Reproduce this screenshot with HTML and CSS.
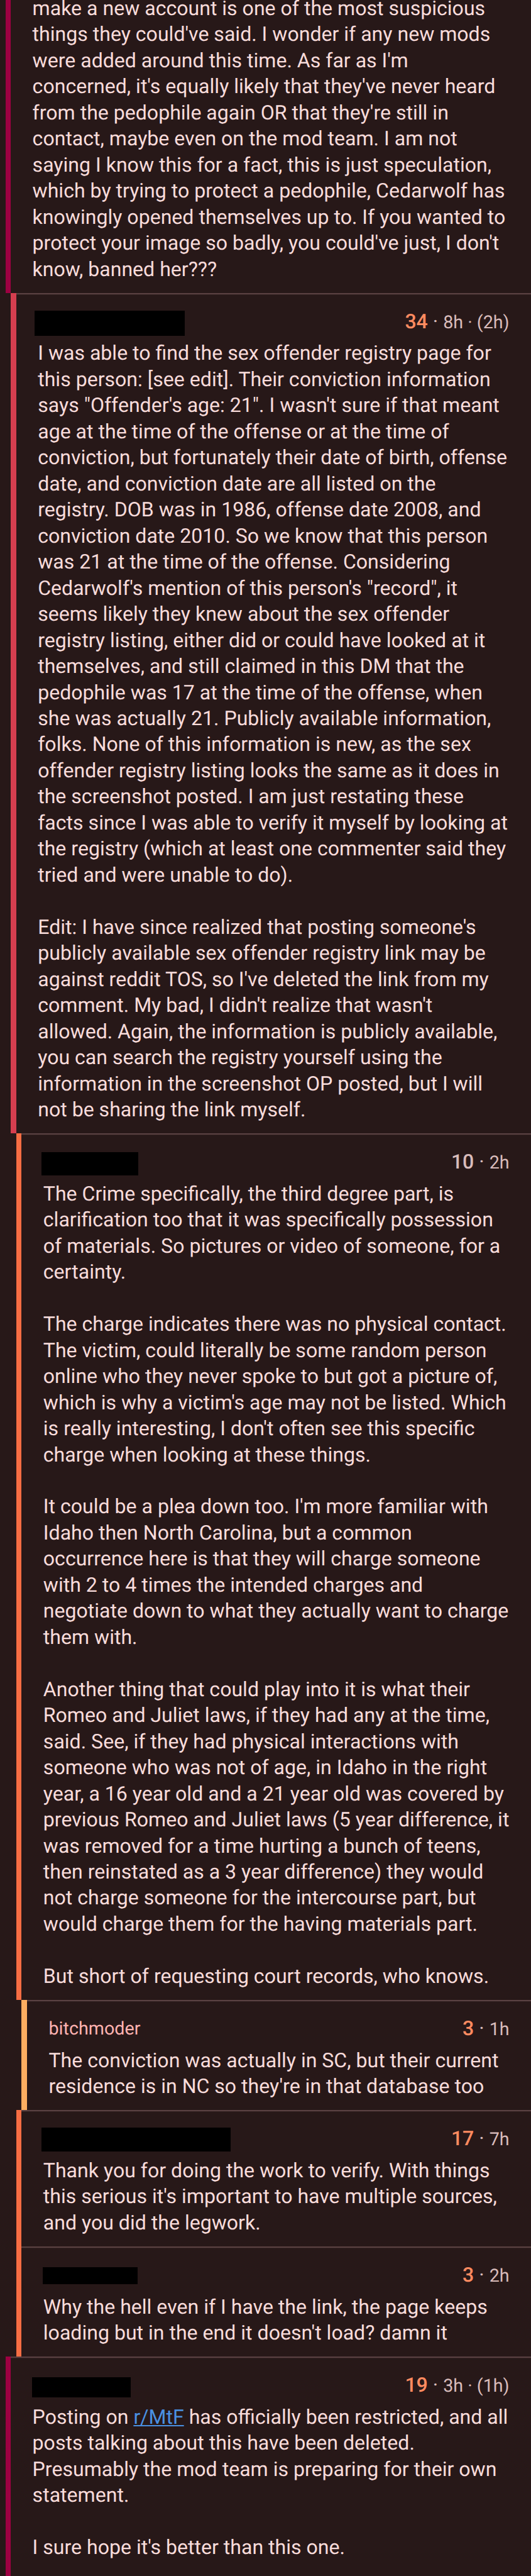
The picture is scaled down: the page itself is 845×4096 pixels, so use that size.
FILE: index.html
```html
<!DOCTYPE html>
<html lang="en">
<head>
<meta charset="utf-8">
<title>Comments</title>
<link rel="stylesheet" href="styles.css">
</head>
<body>
<main class="thread">
<article class="comment level-1 continued"><i class="bar"></i><div class="content">
<p class="text">make a new account is one of the most suspicious
things they could've said. I wonder if any new mods
were added around this time. As far as I'm
concerned, it's equally likely that they've never heard
from the pedophile again OR that they're still in
contact, maybe even on the mod team. I am not
saying I know this for a fact, this is just speculation,
which by trying to protect a pedophile, Cedarwolf has
knowingly opened themselves up to. If you wanted to
protect your image so badly, you could've just, I don't
know, banned her???</p>
</div></article>
<article class="comment level-2"><i class="bar"></i><div class="content">
<header class="head"><span class="redacted r-a"></span><span class="meta"><b class="score up">34</b><span class="dot"> · </span>8h · (2h)</span></header>
<p class="text">I was able to find the sex offender registry page for
this person: [see edit]. Their conviction information
says "Offender's age: 21". I wasn't sure if that meant
age at the time of the offense or at the time of
conviction, but fortunately their date of birth, offense
date, and conviction date are all listed on the
registry. DOB was in 1986, offense date 2008, and
conviction date 2010. So we know that this person
was 21 at the time of the offense. Considering
Cedarwolf's mention of this person's "record", it
seems likely they knew about the sex offender
registry listing, either did or could have looked at it
themselves, and still claimed in this DM that the
pedophile was 17 at the time of the offense, when
she was actually 21. Publicly available information,
folks. None of this information is new, as the sex
offender registry listing looks the same as it does in
the screenshot posted. I am just restating these
facts since I was able to verify it myself by looking at
the registry (which at least one commenter said they
tried and were unable to do).

Edit: I have since realized that posting someone's
publicly available sex offender registry link may be
against reddit TOS, so I've deleted the link from my
comment. My bad, I didn't realize that wasn't
allowed. Again, the information is publicly available,
you can search the registry yourself using the
information in the screenshot OP posted, but I will
not be sharing the link myself.</p>
</div></article>
<article class="comment level-3"><i class="bar"></i><div class="content">
<header class="head"><span class="redacted r-b"></span><span class="meta"><b class="score">10</b><span class="dot"> · </span>2h</span></header>
<p class="text">The Crime specifically, the third degree part, is
clarification too that it was specifically possession
of materials. So pictures or video of someone, for a
certainty.

The charge indicates there was no physical contact.
The victim, could literally be some random person
online who they never spoke to but got a picture of,
which is why a victim's age may not be listed. Which
is really interesting, I don't often see this specific
charge when looking at these things.

It could be a plea down too. I'm more familiar with
Idaho then North Carolina, but a common
occurrence here is that they will charge someone
with 2 to 4 times the intended charges and
negotiate down to what they actually want to charge
them with.

Another thing that could play into it is what their
Romeo and Juliet laws, if they had any at the time,
said. See, if they had physical interactions with
someone who was not of age, in Idaho in the right
year, a 16 year old and a 21 year old was covered by
previous Romeo and Juliet laws (5 year difference, it
was removed for a time hurting a bunch of teens,
then reinstated as a 3 year difference) they would
not charge someone for the intercourse part, but
would charge them for the having materials part.

But short of requesting court records, who knows.</p>
</div></article>
<article class="comment level-4"><i class="bar"></i><div class="content">
<header class="head"><span class="user">bitchmoder</span><span class="meta"><b class="score up">3</b><span class="dot"> · </span>1h</span></header>
<p class="text">The conviction was actually in SC, but their current
residence is in NC so they're in that database too</p>
</div></article>
<article class="comment level-3"><i class="bar"></i><div class="content">
<header class="head"><span class="redacted r-c"></span><span class="meta"><b class="score up">17</b><span class="dot"> · </span>7h</span></header>
<p class="text">Thank you for doing the work to verify. With things
this serious it's important to have multiple sources,
and you did the legwork.</p>
</div></article>
<article class="comment level-3"><i class="bar"></i><div class="content">
<header class="head"><span class="redacted r-d"></span><span class="meta"><b class="score up">3</b><span class="dot"> · </span>2h</span></header>
<p class="text">Why the hell even if I have the link, the page keeps
loading but in the end it doesn't load? damn it</p>
</div></article>
<article class="comment level-1 last"><i class="bar"></i><div class="content">
<header class="head"><span class="redacted r-e"></span><span class="meta"><b class="score up">19</b><span class="dot"> · </span>3h · (1h)</span></header>
<p class="text">Posting on <a class="link" href="#">r/MtF</a> has officially been restricted, and all
posts talking about this have been deleted.
Presumably the mod team is preparing for their own
statement.

I sure hope it's better than this one.</p>
</div></article>
</main>
</body>
</html>
```
FILE: styles.css
```css
/* 1rem = 100 design pixels */
html {
  font-size: 78.2407px;
  background: #271818;
}

body {
  margin: 0;
  font-family: Roboto, "Liberation Sans", sans-serif;
  text-rendering: geometricPrecision;
  color: #f8dcdb;
}

.thread {
  height: 4096px;
  overflow: hidden;
}

.comment {
  display: flex;
}

.level-1 { margin-left: 0.11rem; --bar: #9e0142; }
.level-2 { margin-left: 0.22rem; --bar: #d53e4f; }
.level-3 { margin-left: 0.33rem; --bar: #f66d43; }
.level-4 { margin-left: 0.44rem; --bar: #fdae61; }

.bar {
  flex: none;
  width: 0.11rem;
  background: var(--bar);
}

.content {
  flex: 1;
  box-sizing: border-box;
  min-width: 0;
  padding: 0 0.44rem 0.21rem;
  box-shadow: inset 0 0.03rem #5a4142;
}

.continued { margin-top: -0.09rem; }
.continued .content { box-shadow: none; }
.last .content { padding-bottom: 0.4rem; }

.head {
  display: flex;
  justify-content: space-between;
  box-sizing: border-box;
  height: 0.97rem;
  font-size: 0.367rem;
}

.user,
.meta {
  padding-top: 0.335rem;
  line-height: 0.5rem;
  white-space: pre;
}

.user {
  padding-top: 0.345rem;
  color: #ffb3b1;
}

.meta { color: #d9bcbb; }

.score {
  font-size: 0.41rem;
  font-weight: 500;
}

.score.up { color: #ff8b60; }

.dot { font-size: 0.41rem; }

.redacted { background: #000; }

.r-a { width: 3.06rem; height: 0.51rem; margin: 0.37rem 0 0 -0.07rem; }
.r-b { width: 1.97rem; height: 0.48rem; margin: 0.38rem 0 0 -0.04rem; }
.r-c { width: 3.85rem; height: 0.48rem; margin: 0.36rem 0 0 -0.04rem; }
.r-d { width: 1.93rem; height: 0.34rem; margin: 0.43rem 0 0 -0.01rem; }
.r-e { width: 2.01rem; height: 0.41rem; margin: 0.42rem 0 0 -0.01rem; }

.text {
  margin: 0;
  font-size: 0.41rem;
  line-height: 0.53rem;
  white-space: pre;
}

.link {
  color: #4a90e2;
  text-decoration-thickness: 2px;
  text-decoration-skip-ink: none;
  text-underline-offset: 2px;
}
```
